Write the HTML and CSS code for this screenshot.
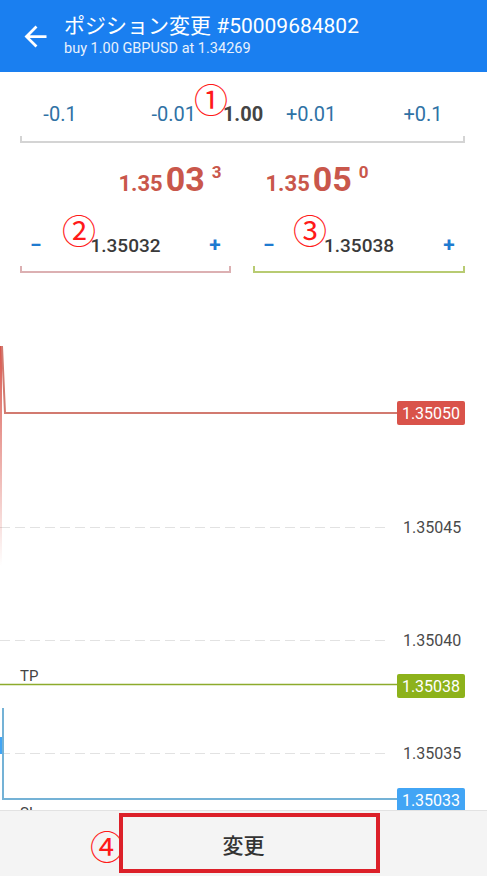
FILE: index.html
```html
<!DOCTYPE html>
<html lang="ja">
<head>
    <meta charset="UTF-8">
    <meta name="viewport" content="width=device-width, initial-scale=1.0">
    <title>ポジション変更</title>
    <link rel="stylesheet" href="styles.css">
</head>
<body>
    <header class="appbar">
        <svg class="back" viewBox="0 0 24 24" width="33" height="33">
            <path d="M20 11H7.83l5.59-5.59L12 4l-8 8 8 8 1.41-1.41L7.83 13H20v-2z" fill="#fff"/>
        </svg>
        <div class="titles">
            <h1>ポジション変更 #50009684802</h1>
            <p>buy 1.00 GBPUSD at 1.34269</p>
        </div>
    </header>

    <section class="volume">
        <div class="volume-row">
            <span class="step">-0.1</span>
            <span class="step right">-0.01</span>
            <span class="lots">1.00</span>
            <span class="step left">+0.01</span>
            <span class="step">+0.1</span>
        </div>
        <div class="bracket grey"></div>
        <span class="mark mark-1">①</span>
    </section>

    <section class="prices">
        <div class="price"><span class="small">1.35</span><span class="big">03</span><sup>3</sup></div>
        <div class="price"><span class="small">1.35</span><span class="big">05</span><sup>0</sup></div>
    </section>

    <section class="levels">
        <div class="level">
            <div class="level-row">
                <span class="sign">−</span>
                <span class="value">1.35032</span>
                <span class="sign">+</span>
            </div>
            <div class="bracket pink"></div>
            <span class="mark mark-2">②</span>
        </div>
        <div class="level">
            <div class="level-row">
                <span class="sign">−</span>
                <span class="value">1.35038</span>
                <span class="sign">+</span>
            </div>
            <div class="bracket green"></div>
            <span class="mark mark-3">③</span>
        </div>
    </section>

    <div class="chart">
        <svg viewBox="0 0 487 519" width="487" height="519">
            <defs>
                <linearGradient id="fade" gradientUnits="userSpaceOnUse" x1="0" y1="55" x2="0" y2="275">
                    <stop offset="0" stop-color="#d8544a"/>
                    <stop offset="1" stop-color="#d8544a" stop-opacity="0"/>
                </linearGradient>
            </defs>
            <!-- grid -->
            <g stroke="#e2e2e2" stroke-width="1" stroke-dasharray="10 5">
                <line x1="0" y1="236.5" x2="387" y2="236.5"/>
                <line x1="0" y1="349.5" x2="387" y2="349.5"/>
                <line x1="0" y1="462.5" x2="387" y2="462.5"/>
            </g>
            <g class="axis">
                <text x="403" y="242">1.35045</text>
                <text x="403" y="355">1.35040</text>
                <text x="403" y="468">1.35035</text>
            </g>

            <!-- price line -->
            <line x1="1" y1="55" x2="1" y2="275" stroke="url(#fade)" stroke-width="2"/>
            <polyline points="2,55 5,122 397,122" fill="none" stroke="#d27a70" stroke-width="2"/>
            <rect x="397" y="110" width="68" height="24" rx="2" fill="#d9534a"/>
            <text class="tag" x="431" y="128">1.35050</text>

            <!-- take profit -->
            <line x1="0" y1="393.5" x2="397" y2="393.5" stroke="#8dab2c" stroke-width="1.5"/>
            <rect x="397" y="383" width="68" height="24" rx="2" fill="#8db21b"/>
            <text class="tag" x="431" y="401">1.35038</text>
            <text class="line-name" x="20" y="390">TP</text>

            <!-- stop loss -->
            <rect x="0" y="446" width="2" height="17" fill="#42a5f5"/>
            <polyline points="3,417 3,508 397,508" fill="none" stroke="#74b2d6" stroke-width="2"/>
            <rect x="397" y="497" width="68" height="24" rx="2" fill="#42a5f5"/>
            <text class="tag" x="431" y="515">1.35033</text>
            <text class="line-name" x="20" y="527">SL</text>
        </svg>
    </div>

    <footer class="actions">
        <button class="apply">変更</button>
        <span class="mark mark-4">④</span>
        <span class="highlight"></span>
    </footer>
</body>
</html>
```

FILE: styles.css
```css
body{
    margin: 0;
    width: 487px;
    height: 876px;
    overflow: hidden;
    position: relative;
    background: #fff;
    font-family: Roboto, "Noto Sans CJK JP", sans-serif;
    color: #333;
}
.appbar{
    height: 72px;
    background: #1a7ff0;
    display: flex;
    align-items: center;
    box-sizing: border-box;
    padding-left: 19px;
    color: #fff;
}
.back{
    flex: none;
    margin-right: 12px;
}
.titles h1{
    margin: 0;
    font-size: 21px;
    font-weight: 400;
    line-height: 26px;
    font-family: Roboto, "Noto Sans CJK JP", sans-serif;
}
.titles p{
    margin: 0;
    font-size: 14.5px;
    line-height: 20px;
    color: #e8f1fd;
}
.volume{
    position: relative;
    padding: 18px 22px 0 20px;
}
.volume-row{
    display: grid;
    grid-template-columns: 80px 113px 60px 108px 84px;
    height: 48px;
    align-items: center;
    font-size: 20px;
    color: #2f72a5;
}
.step{
    text-align: center;
}
.step.right{
    text-align: right;
    padding-right: 17px;
}
.step.left{
    text-align: left;
    padding-left: 13px;
}
.lots{
    text-align: center;
    font-weight: 700;
    color: #444;
}
.bracket{
    height: 5px;
    margin-top: -2px;
    border: 2px solid;
    border-top: none;
}
.grey{
    border-color: #d4d4d4;
}
.pink{
    border-color: #dcb0b2;
}
.green{
    border-color: #b8cb72;
}
.prices{
    display: flex;
    justify-content: center;
    gap: 44px;
    padding-top: 20px;
    padding-left: 0;
    color: #c9574b;
    font-weight: 700;
}
.price{
    display: flex;
    align-items: baseline;
    line-height: 33px;
}
.price .small{
    font-size: 22px;
    margin-right: 3px;
}
.price .big{
    font-size: 34px;
}
.price sup{
    font-size: 17px;
    margin-left: 7px;
    align-self: flex-start;
    line-height: 17px;
    margin-top: 1px;
}
.levels{
    display: grid;
    grid-template-columns: 211px 212px;
    gap: 22px;
    padding: 22px 0 0 20px;
}
.level{
    position: relative;
}
.level-row{
    display: flex;
    justify-content: space-between;
    align-items: center;
    height: 46px;
    padding: 0 10px;
}
.sign{
    width: 12px;
    text-align: center;
    font-size: 21px;
    font-weight: 700;
    color: #1f7bd0;
}
.value{
    font-size: 19px;
    font-weight: 500;
    color: #3a3a3a;
}
.chart{
    margin-top: 18px;
    height: 519px;
    overflow: hidden;
}
.chart svg{
    display: block;
    font-family: Roboto, sans-serif;
}
.axis text{
    font-size: 16px;
    fill: #4a4a4a;
}
.tag{
    font-size: 16px;
    fill: #fff;
    text-anchor: middle;
}
.line-name{
    font-size: 15px;
    fill: #444;
}
.actions{
    position: relative;
    height: 67px;
    box-sizing: border-box;
    background: #f4f4f4;
    border-top: 1px solid #e2e2e2;
    display: flex;
    justify-content: center;
    align-items: center;
}
.apply{
    background: none;
    border: none;
    font-family: "Noto Sans CJK JP", sans-serif;
    font-size: 21px;
    font-weight: 500;
    color: #333;
    padding: 0;
}
.highlight{
    position: absolute;
    left: 119px;
    top: 2px;
    width: 261px;
    height: 60px;
    box-sizing: border-box;
    border: 4px solid #dc2029;
}
.mark{
    position: absolute;
    font-family: "Noto Sans CJK JP", sans-serif;
    font-size: 34px;
    line-height: 34px;
    color: #ff1a1a;
}
.mark-1{
    left: 194px;
    top: 10px;
}
.mark-2{
    left: 42px;
    top: -9px;
}
.mark-3{
    left: 40px;
    top: -9px;
}
.mark-4{
    left: 90px;
    top: 18px;
}
```
